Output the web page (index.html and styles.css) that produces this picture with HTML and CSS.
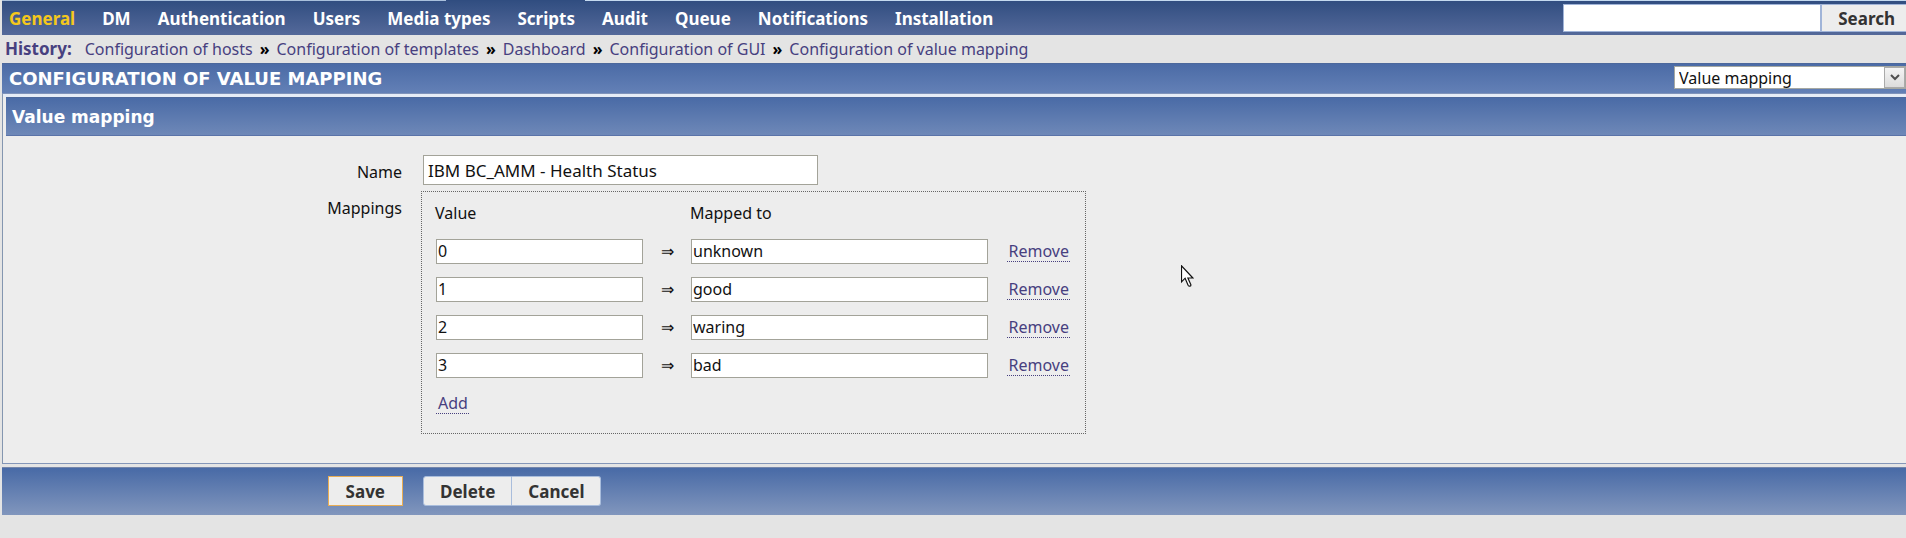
FILE: index.html
```html
<!DOCTYPE html>
<html lang="en">
<head>
<meta charset="utf-8">
<title>Configuration of value mapping</title>
<link rel="stylesheet" href="styles.css">
</head>
<body>
<header class="menubar">
  <nav class="menu" aria-label="Administration">
    <a class="menu-link active" href="#">General</a>
    <a class="menu-link" href="#">DM</a>
    <a class="menu-link" href="#">Authentication</a>
    <a class="menu-link" href="#">Users</a>
    <a class="menu-link" href="#">Media types</a>
    <a class="menu-link" href="#">Scripts</a>
    <a class="menu-link" href="#">Audit</a>
    <a class="menu-link" href="#">Queue</a>
    <a class="menu-link" href="#">Notifications</a>
    <a class="menu-link" href="#">Installation</a>
  </nav>
  <form class="search">
    <input class="search-input" type="text" aria-label="Search">
    <button class="search-button" type="button">Search</button>
  </form>
</header>
<nav class="history" aria-label="History">
  <span class="history-title">History:</span>
  <a href="#">Configuration of hosts</a><span class="sep">»</span>
  <a href="#">Configuration of templates</a><span class="sep">»</span>
  <a href="#">Dashboard</a><span class="sep">»</span>
  <a href="#">Configuration of GUI</a><span class="sep">»</span>
  <a href="#">Configuration of value mapping</a>
</nav>
<div class="titlebar">
  <h1 class="title">CONFIGURATION OF VALUE MAPPING</h1>
  <div class="picker">
    <select class="picker-select" aria-label="Configuration section"><option>Value mapping</option></select>
    <span class="picker-arrow"><svg width="10" height="7" viewBox="0 0 10 7"><path d="M1 1l4 4 4-4" fill="none" stroke="#505050" stroke-width="2"/></svg></span>
  </div>
</div>
<main>
  <section class="panel">
    <h2 class="panel-title">Value mapping</h2>
    <div class="form">
      <label class="label" for="name">Name</label>
      <input class="name-input" id="name" type="text" value="IBM BC_AMM - Health Status">
      <span class="label" id="mappings-label">Mappings</span>
      <div class="mappings">
        <table class="map-table" aria-labelledby="mappings-label">
          <thead>
            <tr><th class="col-value">Value</th><th class="col-arrow"></th><th class="col-mapped">Mapped to</th><th class="col-action"></th></tr>
          </thead>
          <tbody>
            <tr><td><input class="field" type="text" value="0" aria-label="Value 1"></td><td class="arrow">⇒</td><td><input class="field" type="text" value="unknown" aria-label="Mapped to 1"></td><td class="action"><button class="link" type="button">Remove</button></td></tr>
            <tr><td><input class="field" type="text" value="1" aria-label="Value 2"></td><td class="arrow">⇒</td><td><input class="field" type="text" value="good" aria-label="Mapped to 2"></td><td class="action"><button class="link" type="button">Remove</button></td></tr>
            <tr><td><input class="field" type="text" value="2" aria-label="Value 3"></td><td class="arrow">⇒</td><td><input class="field" type="text" value="waring" aria-label="Mapped to 3"></td><td class="action"><button class="link" type="button">Remove</button></td></tr>
            <tr><td><input class="field" type="text" value="3" aria-label="Value 4"></td><td class="arrow">⇒</td><td><input class="field" type="text" value="bad" aria-label="Mapped to 4"></td><td class="action"><button class="link" type="button">Remove</button></td></tr>
            <tr><td class="add" colspan="4"><button class="link" type="button">Add</button></td></tr>
          </tbody>
        </table>
      </div>
    </div>
  </section>
  <div class="footer">
    <div class="footer-main"><button class="button save" type="button">Save</button></div>
    <div class="footer-group"><button class="button first" type="button">Delete</button><button class="button last" type="button">Cancel</button></div>
  </div>
</main>
<svg class="pointer" width="13" height="22" viewBox="0 0 13 22" aria-hidden="true"><path d="M.5 .8v16l3.6-3.6 3 7q1 1.6 2.6.6l.2-1-3-6.8h5z" fill="#fff" stroke="#111" stroke-width="1.2"/></svg>
</body>
</html>
```
FILE: styles.css
```css
* {
  box-sizing: border-box;
}

body {
  margin: 0;
  padding-left: 2px;
  background: #e4e4e4;
  color: #111;
  font: 16px/24px "Noto Sans", "Open Sans", sans-serif;
}

input,
select,
button {
  margin: 0;
  border-radius: 0;
  font: inherit;
  color: inherit;
}

a {
  color: #47407f;
  text-decoration: none;
}

/* The top edge is open below the selected main tab. */
.menubar {
  display: flex;
  justify-content: space-between;
  align-items: center;
  height: 35px;
  padding-top: 1px;
  background:
    linear-gradient(90deg, #a9c0dc 444px, #304d80 444px 583px, #c4daf0 583px) top / 100% 1px no-repeat,
    linear-gradient(#304d80, #54699a);
}

.menu {
  display: flex;
  gap: 27px;
  padding: 1px 0 0 7px;
  font-size: 17px;
  font-weight: bold;
}

.menu-link {
  color: #fff;
}

.menu-link.active {
  color: #f5c81c;
}

.search {
  display: flex;
}

.search-input {
  width: 258px;
  height: 28px;
  border: 1px solid #a0b4d8;
  background: #fff;
}

.search-button {
  height: 28px;
  padding: 1px 11px 0 16px;
  border: 1px solid #a0b4d8;
  border-width: 1px 0 1px 1px;
  background: #ededed;
  color: #333;
  font-size: 17px;
  font-weight: bold;
}

.history {
  display: flex;
  gap: 7px;
  height: 28px;
  padding-left: 3px;
  align-items: center;
}

.history-title {
  margin-right: 6px;
  color: #47407f;
  font-size: 17px;
  font-weight: bold;
}

.sep {
  color: #000;
  font-weight: bold;
}

.titlebar {
  display: flex;
  justify-content: space-between;
  align-items: center;
  height: 31px;
  padding-left: 7px;
  border-top: 1px solid #4c689c;
  border-bottom: 1px solid #7f93ba;
  background: linear-gradient(#4b6ba6, #6380b6);
}

.title,
.panel-title {
  margin: 0;
  color: #fff;
  font: bold 17px/24px "DejaVu Sans", sans-serif;
}

.title {
  font-size: 18px;
}

.picker {
  display: flex;
  width: 232px;
  height: 23px;
  margin-bottom: 2px;
  border: 1px solid #a5a8a2;
  background: #fff;
}

.picker-select {
  flex: 1;
  padding: 0 4px;
  border: 0;
  background: transparent;
  appearance: none;
  line-height: 20px;
}

.picker-arrow {
  display: flex;
  width: 21px;
  align-items: center;
  justify-content: center;
  border: 1px solid #aaa;
  background: linear-gradient(#f4f4f4, #dcdcdc);
}

.panel {
  padding: 3px 0 29px 3px;
  border-left: 1px solid #8496b0;
  border-bottom: 1px solid #8496b8;
  background: #ededed;
  box-shadow: inset 0 3px #e6ecf6;
}

.panel-title {
  padding: 7px 6px 6px;
  border-top: 1px solid #4c689c;
  border-bottom: 1px solid #5a73a8;
  background: linear-gradient(#4a6ba6, #6e88b8);
}

.form {
  display: grid;
  grid-template-columns: 396px max-content;
  column-gap: 21px;
  row-gap: 6px;
  padding-top: 19px;
}

.label {
  padding-top: 5px;
  text-align: right;
}

.name-input {
  width: 395px;
  height: 30px;
  padding: 0 4px;
  border: 1px solid #a3a399;
  background: #fff;
  font-size: 17px;
}

.mappings {
  width: 665px;
  margin-left: -2px;
  padding: 1px 15px 11px 13px;
  border: 1px dotted #666;
}

.map-table {
  width: 100%;
  table-layout: fixed;
  border-collapse: collapse;
}

.map-table th,
.map-table td {
  height: 38px;
  padding: 0;
  text-align: left;
  font-weight: normal;
}

.map-table th {
  height: 39px;
}

.map-table .col-value {
  width: 208px;
}

.map-table .col-arrow {
  width: 47px;
}

.map-table .col-mapped {
  width: 298px;
}

.map-table td:nth-child(-n+3):not(.arrow) {
  padding-left: 1px;
}

.map-table .arrow {
  padding-left: 2px;
  text-align: center;
}

.map-table .action {
  text-align: right;
}

.map-table td.add {
  padding-left: 0;
}

.field {
  display: block;
  width: 100%;
  height: 25px;
  padding: 0 1px;
  border: 1px solid #a3a399;
  background: #fff;
}

.link {
  padding: 0 1px 0 2px;
  border: 0;
  border-bottom: 1px dotted #47407f;
  background: none;
  color: #47407f;
  line-height: 20px;
}

.footer {
  display: grid;
  grid-template-columns: 401px max-content;
  column-gap: 20px;
  margin-top: 3px;
  padding: 8px 0 9px;
  border-top: 1px solid #7485aa;
  background: linear-gradient(#486aa6, #8196bd);
}

.footer-main {
  text-align: right;
}

.footer-group {
  display: flex;
}

.button {
  height: 30px;
  padding: 1px 16px 0;
  border: 1px solid #a9bddc;
  background: #ededed;
  color: #333;
  font-size: 17px;
  font-weight: bold;
}

.button.save {
  padding: 1px 17px 0;
  border-color: #e8ad55;
}

.button.first {
  border-radius: 3px 0 0 3px;
}

.button.last {
  border-left: 0;
  border-radius: 0 3px 3px 0;
}

.pointer {
  position: absolute;
  left: 1181px;
  top: 265px;
}
```
